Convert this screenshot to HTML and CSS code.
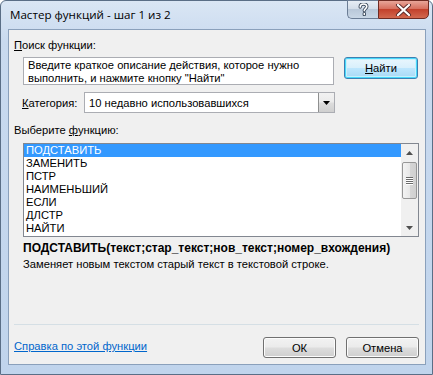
FILE: index.html
```html
<!DOCTYPE html>
<html lang="ru">
<head>
<meta charset="utf-8">
<title>Мастер функций</title>
<link rel="stylesheet" href="styles.css">
</head>
<body>
<div class="window">
  <div class="titlebar">
    <span class="title">Мастер функций - шаг 1 из 2</span>
    <div class="caption-btns">
      <span class="cbtn help"><svg width="11" height="13" viewBox="0 0 11 13"><path d="M2.2 4 C2.2 1.6 3.6 1 5.5 1 C7.6 1 8.8 2 8.8 3.6 C8.8 5.4 6.3 5.7 6.3 7.6 M6.3 10.5 V11.5" fill="none" stroke="#3b4a5c" stroke-width="3.4" stroke-linecap="round"/><path d="M2.2 4 C2.2 1.6 3.6 1 5.5 1 C7.6 1 8.8 2 8.8 3.6 C8.8 5.4 6.3 5.7 6.3 7.6 M6.3 10.5 V11.5" fill="none" stroke="#ffffff" stroke-width="1.6" stroke-linecap="round"/></svg></span>
      <span class="cbtn close"><svg width="17" height="12" viewBox="0 0 17 12"><path d="M3 1 L14 11 M14 1 L3 11" stroke="#5a2a2a" stroke-width="4" stroke-linecap="round"/><path d="M3 1 L14 11 M14 1 L3 11" stroke="#ffffff" stroke-width="2.2" stroke-linecap="round"/></svg></span>
    </div>
  </div>
  <div class="client">
    <div class="label"><u>П</u>оиск функции:</div>
    <div class="search-row">
      <div class="textbox">Введите краткое описание действия, которое нужно выполнить, и нажмите кнопку "Найти"</div>
      <button class="btn default"><u>Н</u>айти</button>
    </div>
    <div class="cat-row">
      <span class="cat-label"><u>К</u>атегория:</span>
      <div class="combo">
        <span class="combo-text">10 недавно использовавшихся</span>
        <span class="combo-btn"><svg width="7" height="4" viewBox="0 0 7 4"><path d="M0 0 H7 L3.5 4 Z" fill="#000"/></svg></span>
      </div>
    </div>
    <div class="label choose">Выберите <u>ф</u>ункцию:</div>
    <div class="list">
      <ul class="items">
        <li class="sel">ПОДСТАВИТЬ</li>
        <li>ЗАМЕНИТЬ</li>
        <li>ПСТР</li>
        <li>НАИМЕНЬШИЙ</li>
        <li>ЕСЛИ</li>
        <li>ДЛСТР</li>
        <li>НАЙТИ</li>
      </ul>
      <div class="scrollbar">
        <span class="arrow"><svg width="7" height="4" viewBox="0 0 7 4"><path d="M3.5 0 L7 4 H0 Z" fill="#505050"/></svg></span>
        <div class="track">
          <div class="thumb"><span class="grip"></span><span class="grip"></span><span class="grip"></span><span class="grip"></span></div>
        </div>
        <span class="arrow"><svg width="7" height="4" viewBox="0 0 7 4"><path d="M0 0 H7 L3.5 4 Z" fill="#505050"/></svg></span>
      </div>
    </div>
    <div class="sig">ПОДСТАВИТЬ(текст;стар_текст;нов_текст;номер_вхождения)</div>
    <div class="desc">Заменяет новым текстом старый текст в текстовой строке.</div>
    <div class="grow"></div>
    <div class="sep"></div>
    <div class="footer">
      <a class="help-link" href="#">Справка по этой функции</a>
      <div class="btns">
        <button class="btn">ОК</button>
        <button class="btn">Отмена</button>
      </div>
    </div>
  </div>
</div>
</body>
</html>
```
FILE: styles.css
```css
html, body {
  margin: 0;
  padding: 0;
  background: #ffffff;
}
body {
  font-family: "Liberation Sans", Arial, sans-serif;
  font-size: 11.2px;
  color: #000;
}
.window {
  width: 433px;
  height: 375px;
  box-sizing: border-box;
  border: 1px solid #5a6e86;
  border-radius: 6px 6px 0 0;
  background: linear-gradient(to bottom, #dae6f4 0px, #c9daef 40px, #c0d4ec 100%);
  display: flex;
  flex-direction: column;
  padding: 0 6px 9px 7px;
}
.titlebar {
  height: 28px;
  display: flex;
  align-items: flex-start;
  justify-content: space-between;
  flex: none;
}
.title {
  font-family: "Open Sans", "Noto Sans", sans-serif;
  font-size: 11.6px;
  margin: 6px 0 0 2px;
  color: #000;
}
.caption-btns {
  display: flex;
  margin-right: -3px;
  margin-top: -1px;
}
.cbtn {
  height: 19px;
  display: flex;
  align-items: center;
  justify-content: center;
  border: 1px solid #6b7d95;
  box-sizing: border-box;
}
.help {
  width: 31px;
  border-radius: 0 0 0 5px;
  border-right: none;
  background: linear-gradient(to bottom, #e6edf5 0%, #d3dde9 45%, #b9c8d9 50%, #c9d7e6 100%);
}
.close {
  width: 51px;
  border-radius: 0 0 5px 0;
  border-color: #6e2b23;
  background: linear-gradient(to bottom, #e8a599 0%, #d7705f 45%, #c3412c 50%, #d2684f 100%);
}
.client {
  flex: 1;
  background: #f0f0f0;
  border: 1px solid #8aa0bb;
  display: flex;
  flex-direction: column;
  padding: 0 6px 0 5px;
}
.label {
  height: 13px;
  line-height: 13px;
  margin-top: 9px;
}
.search-row {
  display: flex;
  align-items: flex-start;
  margin-top: 5px;
  padding-left: 9px;
}
.textbox {
  width: 311px;
  height: 28px;
  box-sizing: border-box;
  border: 1px solid #abadb3;
  background: #fff;
  padding: 1px 4px 0 4px;
  line-height: 13px;
}
.btn {
  font-family: "Liberation Sans", Arial, sans-serif;
  font-size: 11.2px;
  width: 74px;
  height: 22px;
  border: 1px solid #707070;
  border-radius: 3px;
  background: linear-gradient(to bottom, #f2f2f2 0%, #ebebeb 48%, #dddddd 52%, #cfcfcf 100%);
  box-shadow: inset 0 0 0 1px #fcfcfc;
  color: #000;
  padding: 0;
}
.btn.default {
  margin-left: 10px;
  border-color: #3c7fb1;
  box-shadow: inset 0 0 0 1px #48d8fb, inset 0 0 0 2px #c6f1fc;
  background: linear-gradient(to bottom, #eaf6fd 0%, #d9f0fc 48%, #bee6fd 52%, #a7d9f5 100%);
}
.cat-row {
  display: flex;
  align-items: center;
  margin-top: 7px;
  padding-left: 8px;
}
.cat-label {
  width: 62px;
}
.combo {
  width: 251px;
  height: 21px;
  box-sizing: border-box;
  border: 1px solid #abadb3;
  background: #fff;
  display: flex;
  align-items: center;
  justify-content: space-between;
}
.combo-text {
  padding-left: 4px;
}
.combo-btn {
  width: 16px;
  height: 19px;
  box-sizing: border-box;
  border-left: 1px solid #8e8f8f;
  background: linear-gradient(to bottom, #f2f2f2 0%, #ebebeb 48%, #dddddd 52%, #cfcfcf 100%);
  display: flex;
  align-items: center;
  justify-content: center;
}
.choose {
  margin-top: 11px;
}
.list {
  margin: 6px 0 0 9px;
  width: 396px;
  height: 94px;
  box-sizing: border-box;
  border: 1px solid #828790;
  background: #fff;
  display: flex;
}
.items {
  list-style: none;
  margin: 0;
  padding: 0;
  flex: 1;
}
.items li {
  height: 13px;
  line-height: 13px;
  padding-left: 2px;
}
.items li.sel {
  background: #3399ff;
  color: #fff;
}
.scrollbar {
  width: 17px;
  background: #f0f0f0;
  display: flex;
  flex-direction: column;
  align-items: center;
}
.arrow {
  height: 17px;
  display: flex;
  align-items: center;
  justify-content: center;
}
.track {
  flex: 1;
  width: 100%;
}
.thumb {
  margin: 1px 1px 0 1px;
  height: 37px;
  box-sizing: border-box;
  border: 1px solid #979797;
  border-radius: 2px;
  background: linear-gradient(to right, #f3f3f3 0%, #e8e8e8 50%, #d6d6d6 51%, #d0d0d0 100%);
  display: flex;
  flex-direction: column;
  align-items: center;
  justify-content: center;
  gap: 1px;
}
.grip {
  width: 7px;
  height: 1px;
  background: #6a6a6a;
  box-shadow: 0 1px 0 #ffffff;
}
.sig {
  margin: 5px 0 0 9px;
  font-weight: bold;
  font-size: 12px;
  line-height: 13px;
}
.desc {
  margin: 3px 0 0 9px;
  line-height: 13px;
}
.grow {
  flex: 1;
}
.sep {
  height: 1px;
  background: #d5dfe5;
}
.footer {
  display: flex;
  align-items: flex-start;
  justify-content: space-between;
  height: 39px;
  box-sizing: border-box;
  padding-top: 12px;
}
.help-link {
  color: #0066cc;
  text-decoration: underline;
  margin-top: 3px;
}
.btns {
  display: flex;
  gap: 10px;
}
.btns .btn {
  width: 73px;
  height: 21px;
}
```
